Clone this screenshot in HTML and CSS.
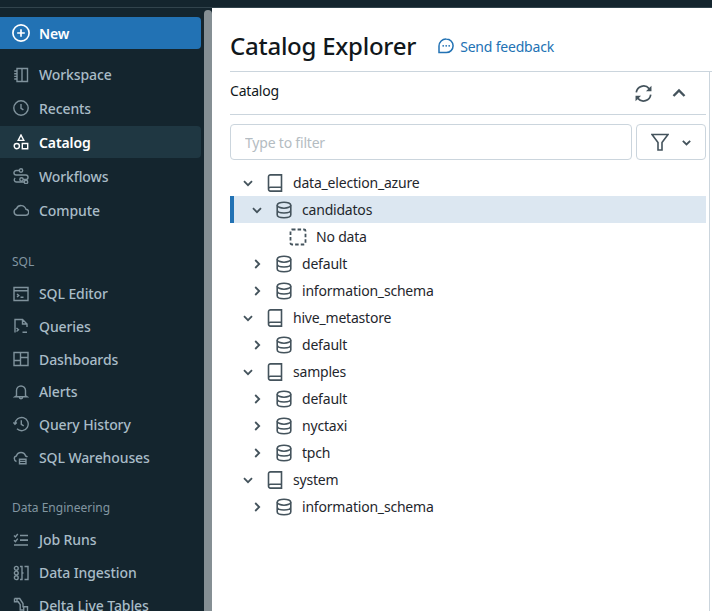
FILE: index.html
```html
<!DOCTYPE html>
<html lang="en">
<head>
    <meta charset="UTF-8">
    <meta name="viewport" content="width=device-width, initial-scale=1.0">
    <title>Catalog Explorer</title>
    <link rel="stylesheet" href="styles.css">
</head>
<body>
    <svg class="sprites" width="0" height="0">
        <symbol id="i-book" viewBox="0 0 18 18"><path d="M2.500 14.800V2.800C2.500 1.600 3.400.9 4.500.9h11v12.400H4.500c-1.200 0-2 .7-2 1.800s.8 2 2 2h11v-3.800"/></symbol>
        <symbol id="i-db" viewBox="0 0 18 18"><ellipse cx="9" cy="4.200" rx="6.800" ry="3"/><path d="M2.200 4.200v9.600c0 1.700 3 3 6.800 3s6.800-1.300 6.800-3V4.200M2.200 9c0 1.700 3 3 6.800 3s6.800-1.300 6.800-3"/></symbol>
        <symbol id="i-down" viewBox="0 0 12 12"><path d="M2 4.200 6 8.200l4-4"/></symbol>
        <symbol id="i-right" viewBox="0 0 12 12"><path d="M4.200 2 8.200 6l-4 4"/></symbol>
    </svg>

    <div class="topbar"></div>
    <div class="app">
        <nav class="sidebar">
            <a class="new-btn">
                <svg class="nav-icon" viewBox="0 0 16 16"><circle cx="8" cy="8" r="7.200"/><path d="M8 4.600v6.800M4.600 8h6.800"/></svg>
                New
            </a>
            <div class="nav-group">
                <a class="nav-item"><svg class="nav-icon" viewBox="0 0 16 16"><path d="M4 1.500h10.500v13H4zM9 1.500v13M1.200 4h2.800M1.200 6.700h2.800M1.200 9.400h2.800M1.200 12h2.800"/></svg>Workspace</a>
                <a class="nav-item"><svg class="nav-icon" viewBox="0 0 16 16"><circle cx="8" cy="8" r="7.200"/><path d="M8 4v4.300l2.400 1.600"/></svg>Recents</a>
                <a class="nav-item active"><svg class="nav-icon" viewBox="0 0 16 16"><path d="M8 1 10.800 6.400H5.200zM9.300 9.500h5.400v5.200H9.300z"/><circle cx="3.800" cy="12.100" r="2.600"/></svg>Catalog</a>
                <a class="nav-item"><svg class="nav-icon" viewBox="0 0 16 16"><path d="M6 2.500H3.200a2.200 2.200 0 0 0 0 4.500h9.600a2.200 2.200 0 0 1 0 4.500H10M11 14H3.400a2.200 2.200 0 0 1-1.200-4"/><circle cx="8" cy="2.500" r="1.700"/><circle cx="8.500" cy="11.500" r="1.700"/><circle cx="13" cy="14" r="1.700"/></svg>Workflows</a>
                <a class="nav-item"><svg class="nav-icon" viewBox="0 0 16 16"><path d="M4 13.200h8.400a3 3 0 0 0 .5-6 5 5 0 0 0-9.400-.6A3.400 3.400 0 0 0 4 13.200z"/></svg>Compute</a>
            </div>

            <div class="nav-title nav-title-sql">SQL</div>
            <div class="nav-group tight">
                <a class="nav-item"><svg class="nav-icon" viewBox="0 0 16 16"><path d="M1 1.500h14v13H1zM1 4.800h14M4 8l1.800 1.500L4 11M7.500 11.200h3"/></svg>SQL Editor</a>
                <a class="nav-item"><svg class="nav-icon" viewBox="0 0 16 16"><path d="M2 14.500V1.500h7.500L14 6v3M9.500 1.500V6H14M3.500 10l2 1.700-2 1.800M9.500 14.300H14"/></svg>Queries</a>
                <a class="nav-item"><svg class="nav-icon" viewBox="0 0 16 16"><path d="M1 1.500h14v13H1zM7.500 1.500v13M7.500 6.500H15M1 9.500h6.500"/></svg>Dashboards</a>
                <a class="nav-item"><svg class="nav-icon" viewBox="0 0 16 16"><path d="M3.500 11.800V6.500a4.500 4.500 0 0 1 9 0v5.300l1.500 1H2zM6.300 13c0 2.300 3.400 2.300 3.400 0"/></svg>Alerts</a>
                <a class="nav-item"><svg class="nav-icon" viewBox="0 0 16 16"><path d="M2 8a6.600 6.600 0 1 1 2 4.800M.4 6.400 2 8.200l1.800-1.600M8.300 4.300v4l2.400 1.500"/></svg>Query History</a>
                <a class="nav-item"><svg class="nav-icon" viewBox="0 0 16 16"><path d="M3.500 12.500C.5 11.500.7 7.500 3.400 7a4.800 4.800 0 0 1 9.200 0c.8.1 1.400.5 1.800 1.100M6.500 10.200h6.500v4.600H6.500zM6.500 12.400h6.500"/></svg>SQL Warehouses</a>
            </div>

            <div class="nav-title nav-title-de">Data Engineering</div>
            <div class="nav-group tight">
                <a class="nav-item"><svg class="nav-icon" viewBox="0 0 16 16"><path d="M1 3.600 2.400 5l2.400-3M7 3.500h8M7 8h8M1 8.200 2.400 9.600l2.400-3M7 8.200h8M1 13h14"/></svg>Job Runs</a>
                <a class="nav-item"><svg class="nav-icon" viewBox="0 0 16 16"><circle cx="3.300" cy="3.300" r="1.900"/><circle cx="3.300" cy="8" r="1.900"/><circle cx="3.300" cy="12.700" r="1.900"/><path d="M7 1.500h2v13H7M9 8h1.500M11.500 1.500H15v13h-3.500"/></svg>Data Ingestion</a>
                <a class="nav-item"><svg class="nav-icon" viewBox="0 0 16 16"><path d="M1.500 1.500h5.200l3.300 5v3.200h4.500V15M1.500 1.500v3.300h3.700l2 2.900V13h3.500M4 1.500v3.300M10.700 9.700V15"/></svg>Delta Live Tables</a>
            </div>
        </nav>
        <div class="scrollbar"></div>

        <main class="content">
            <header class="page-head">
                <h1>Catalog Explorer</h1>
                <a class="feedback">
                    <svg viewBox="0 0 16 16" width="16" height="16"><path d="M8.300 1A6.800 6.800 0 0 1 8.300 14.600H1V8A7 7 0 0 1 8.300 1z"/><circle class="dot" cx="5.200" cy="7.800" r=".9"/><circle class="dot" cx="8.200" cy="7.800" r=".9"/><circle class="dot" cx="11.200" cy="7.800" r=".9"/></svg>
                    Send feedback
                </a>
            </header>

            <section class="panel">
                <div class="panel-inner">
                    <div class="panel-head">
                        <span class="panel-title">Catalog</span>
                        <div class="panel-actions">
                            <svg class="act-icon" viewBox="0 0 16 16"><path d="M1.200 7A6.900 6.900 0 0 1 13.300 3.400M14.800 9a6.900 6.900 0 0 1-12.100 3.600"/><path class="fill" d="M15.500 .7v5.200h-5.200zM.5 15.300v-5.200h5.200z"/></svg>
                            <svg class="act-chevron" viewBox="0 0 14 14"><path d="M1.500 10 7 4.500l5.500 5.500"/></svg>
                        </div>
                    </div>

                    <div class="filter-row">
                        <input class="filter-input" type="text" placeholder="Type to filter">
                        <button class="filter-btn" type="button">
                            <svg class="funnel" viewBox="0 0 18 18"><path d="M1 1.500h16L11 9.500v7.500H7V9.500z"/></svg>
                            <svg class="btn-chevron" viewBox="0 0 12 12"><path d="M2 4.200 6 8.200l4-4"/></svg>
                        </button>
                    </div>

                    <ul class="tree">
                        <li class="row lvl-0"><svg class="caret"><use href="#i-down"/></svg><svg class="ico"><use href="#i-book"/></svg>data_election_azure</li>
                        <li class="row lvl-1 selected"><svg class="caret"><use href="#i-down"/></svg><svg class="ico"><use href="#i-db"/></svg>candidatos</li>
                        <li class="row lvl-2"><svg class="ico" viewBox="0 0 18 18"><rect class="dashed" x="1.500" y="1.500" width="15" height="15" rx="1.500"/></svg>No data</li>
                        <li class="row lvl-1"><svg class="caret"><use href="#i-right"/></svg><svg class="ico"><use href="#i-db"/></svg>default</li>
                        <li class="row lvl-1"><svg class="caret"><use href="#i-right"/></svg><svg class="ico"><use href="#i-db"/></svg>information_schema</li>
                        <li class="row lvl-0"><svg class="caret"><use href="#i-down"/></svg><svg class="ico"><use href="#i-book"/></svg>hive_metastore</li>
                        <li class="row lvl-1"><svg class="caret"><use href="#i-right"/></svg><svg class="ico"><use href="#i-db"/></svg>default</li>
                        <li class="row lvl-0"><svg class="caret"><use href="#i-down"/></svg><svg class="ico"><use href="#i-book"/></svg>samples</li>
                        <li class="row lvl-1"><svg class="caret"><use href="#i-right"/></svg><svg class="ico"><use href="#i-db"/></svg>default</li>
                        <li class="row lvl-1"><svg class="caret"><use href="#i-right"/></svg><svg class="ico"><use href="#i-db"/></svg>nyctaxi</li>
                        <li class="row lvl-1"><svg class="caret"><use href="#i-right"/></svg><svg class="ico"><use href="#i-db"/></svg>tpch</li>
                        <li class="row lvl-0"><svg class="caret"><use href="#i-down"/></svg><svg class="ico"><use href="#i-book"/></svg>system</li>
                        <li class="row lvl-1"><svg class="caret"><use href="#i-right"/></svg><svg class="ico"><use href="#i-db"/></svg>information_schema</li>
                    </ul>
                </div>
            </section>
        </main>
    </div>
</body>
</html>
```

FILE: styles.css
```css
* {
    box-sizing: border-box;
}

html, body {
    height: 100%;
}

body {
    margin: 0;
    overflow: hidden;
    display: flex;
    flex-direction: column;
    background: #14252e;
    font-family: "Noto Sans", "Open Sans", Arial, sans-serif;
    font-size: 14px;
    letter-spacing: -.2px;
    color: #11171c;
}

.sprites {
    position: absolute;
}

.topbar {
    height: 8px;
    flex: none;
    background: #14252e;
    border-bottom: 1px solid #32444d;
}

.app {
    flex: 1;
    display: flex;
    min-height: 0;
}

/* sidebar */
.sidebar {
    width: 204px;
    flex: none;
    padding: 9px 3px 0 0;
    overflow: hidden;
    font-weight: 500;
    letter-spacing: -.1px;
}

.new-btn {
    display: flex;
    align-items: center;
    height: 32px;
    padding-left: 12px;
    gap: 9px;
    background: #2272b4;
    border-radius: 0 4px 4px 0;
    color: #fff;
    font-weight: 600;
}

.nav-group {
    margin-top: 9px;
}

.nav-item {
    display: flex;
    align-items: center;
    height: 33.6px;
    padding-left: 13px;
    gap: 10px;
    color: #a9bcc7;
    border-radius: 0 4px 4px 0;
}

.tight {
    margin-top: 0;
}

.tight .nav-item {
    height: 32.7px;
}

.nav-item.active {
    height: 32px;
    margin: 1px 0 1.5px;
    background: #1f3742;
    color: #fff;
    font-weight: 600;
}

.nav-icon {
    width: 16px;
    height: 16px;
    flex: none;
    fill: none;
    stroke: #7f929c;
    stroke-width: 1.4;
}

.new-btn .nav-icon {
    width: 18px;
    height: 18px;
    stroke: #fff;
    stroke-width: 1.5;
}

.nav-item.active .nav-icon {
    stroke: #fff;
}

.nav-title {
    padding-left: 12px;
    font-size: 12px;
    font-weight: 400;
    line-height: 16px;
    color: #8296a1;
    letter-spacing: 0;
}

.nav-title-sql {
    margin-top: 27.5px;
    margin-bottom: 7px;
}

.nav-title-de {
    margin-top: 26px;
    margin-bottom: 8px;
}

.scrollbar {
    width: 8px;
    flex: none;
    margin-top: 2px;
    background: #858f94;
    border-radius: 4px 4px 0 0;
}

/* main */
.content {
    flex: 1;
    min-width: 0;
    background: #fff;
    padding-left: 18px;
    display: flex;
    flex-direction: column;
}

.page-head {
    display: flex;
    align-items: center;
    height: 64px;
    gap: 22px;
    border-bottom: 1px solid #cbd5dd;
    padding-top: 13px;
}

h1 {
    margin: 0;
    font-size: 24px;
    font-weight: 500;
    line-height: 32px;
    letter-spacing: -.25px;
}

.feedback {
    display: flex;
    align-items: center;
    gap: 6px;
    color: #2272b4;
}

.feedback svg {
    fill: none;
    stroke: #2272b4;
    stroke-width: 1.5;
}

.feedback .dot {
    fill: #2272b4;
    stroke: none;
}

.panel {
    flex: 1;
    border-right: 1px solid #cbd5dd;
    padding-right: 2px;
    margin-right: 2px;
}

.panel-inner {
    width: 476px;
}

.panel-head {
    display: flex;
    align-items: center;
    justify-content: space-between;
    height: 43px;
    border-bottom: 1px solid #cbd5dd;
}

.panel-title {
    margin-top: -5px;
}

.panel-actions {
    display: flex;
    align-items: center;
    gap: 20px;
    padding-right: 20px;
}

.act-icon {
    width: 17px;
    height: 17px;
    fill: none;
    stroke: #44535c;
    stroke-width: 1.6;
}

.act-icon .fill {
    fill: #44535c;
    stroke: none;
}

.act-chevron {
    width: 14px;
    height: 14px;
    fill: none;
    stroke: #44535c;
    stroke-width: 2.4;
}

.filter-row {
    display: flex;
    gap: 4px;
    margin-top: 9px;
    margin-bottom: 9px;
}

.filter-input {
    flex: 1;
    min-width: 0;
    height: 36px;
    padding: 0 14px;
    border: 1px solid #cbd5dd;
    border-radius: 4px;
    font: inherit;
    letter-spacing: inherit;
    outline: none;
}

.filter-input::placeholder {
    color: #b4bcc2;
}

.filter-btn {
    width: 70px;
    height: 36px;
    display: flex;
    align-items: center;
    justify-content: center;
    gap: 12px;
    padding: 0;
    background: #fff;
    border: 1px solid #cbd5dd;
    border-radius: 4px;
}

.funnel {
    width: 18px;
    height: 18px;
    fill: none;
    stroke: #44535c;
    stroke-width: 1.6;
}

.btn-chevron {
    width: 11px;
    height: 11px;
    fill: none;
    stroke: #44535c;
    stroke-width: 2;
}

/* tree */
.tree {
    list-style: none;
    margin: 0;
    padding: 0;
}

.row {
    display: flex;
    align-items: center;
    height: 27px;
    color: #1f272d;
}

.lvl-0 {
    padding-left: 12px;
}

.lvl-1 {
    padding-left: 21px;
}

.lvl-2 {
    padding-left: 59px;
}

.selected {
    background: #dce7f1;
    box-shadow: inset 4px 0 0 #2272b4;
}

.caret {
    width: 12px;
    height: 12px;
    flex: none;
    margin-right: 12px;
    fill: none;
    stroke: #44535c;
    stroke-width: 1.8;
}

.ico {
    width: 18px;
    height: 18px;
    flex: none;
    margin-right: 9px;
    fill: none;
    stroke: #44535c;
    stroke-width: 1.6;
}

.dashed {
    stroke-width: 1.8;
    stroke-dasharray: 3.5 2.1;
}
```
